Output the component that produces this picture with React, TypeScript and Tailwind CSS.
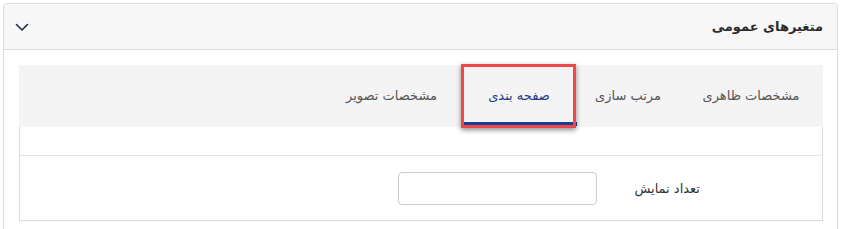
import { useState } from 'react'

const tabs = [
  { title: 'مشخصات ظاهری', w: 'w-[144px]' },
  { title: 'مرتب سازی', w: 'w-[102px]' },
  { title: 'صفحه بندی', w: 'w-[116px]' },
  { title: 'مشخصات تصویر', w: 'w-[139px]' },
]

export default function App() {
  const [active, setActive] = useState(2)
  const [count, setCount] = useState('')

  return (
    <div className="h-[229px] overflow-hidden bg-white px-[3px] pt-[3px] font-['DejaVu_Sans',sans-serif]">
      <div dir="rtl" className="h-[260px] rounded-[4px] border border-[#dcdcdc] bg-white">
        {/* Header */}
        <div className="flex h-[46px] items-center justify-between rounded-t-[4px] border-b border-[#dcdcdc] bg-[#f7f7f7] pl-[10px] pr-[14px]">
          <h3 className="text-[13px] font-bold text-[#2b2b2b]">متغیرهای عمومی</h3>
          <svg className="h-[16px] w-[16px] text-[#1f2a44]" viewBox="0 0 16 16" fill="none" stroke="currentColor">
            <path d="M2.5 5.5 8 11l5.5-5.5" strokeWidth={1.6} strokeLinecap="round" strokeLinejoin="round" />
          </svg>
        </div>

        <div className="pl-[15px] pr-[14px] pt-[15px]">
          {/* Tabs */}
          <div className="flex h-[62px] bg-[#f4f4f4]">
            {tabs.map((t, i) => (
              <button
                key={t.title}
                onClick={() => setActive(i)}
                className={`relative flex shrink-0 items-center justify-center text-[13px] ${t.w} ${
                  i === active ? 'text-[#1e3a8a]' : 'text-[#555]'
                }`}
              >
                {t.title}
                {i === active && (
                  <>
                    <span className="absolute bottom-[1px] left-0 right-0 h-[4px] bg-[#173f93]" />
                    <span className="absolute -bottom-px -top-px left-0 right-px border-[3px] border-[#f04848] shadow-[0_2px_5px_rgba(0,0,0,0.45)]" />
                  </>
                )}
              </button>
            ))}
          </div>

          {/* Panel */}
          <div className="border-x border-b border-[#dcdcdc]">
            <div className="h-[29px] border-b border-[#e3e3e3]" />
            <div className="flex h-[64px] items-center">
              <label className="w-[225px] pr-[122px] pt-[2px] text-[13px] text-[#333]">تعداد نمایش</label>
              <input
                value={count}
                onChange={e => setCount(e.target.value)}
                className="h-[33px] w-[199px] rounded-[4px] border border-[#cccccc] px-2 text-[13px] outline-none"
              />
            </div>
          </div>
        </div>
      </div>
    </div>
  )
}
